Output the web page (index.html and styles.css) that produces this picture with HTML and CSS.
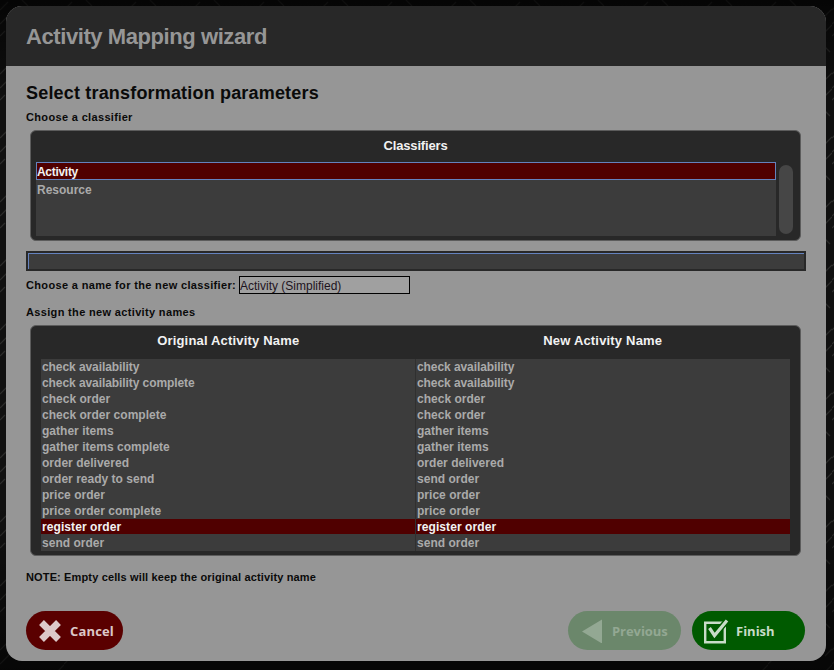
FILE: index.html
```html
<!DOCTYPE html>
<html lang="en">
<head>
<meta charset="utf-8">
<title>Activity Mapping wizard</title>
<link rel="stylesheet" href="styles.css">
</head>
<body>
<svg class="texture" aria-hidden="true" width="834" height="670">
  <defs>
    <pattern id="plate" width="64" height="64" patternUnits="userSpaceOnUse">
      <path d="M0 10 L8 2 M0 24 L9 15 M0 36 L5 31 M57 16 L64 9 M57 32 L64 25 M57 47 L62 52 M22 0 L28 6" stroke="#2b2b2a" stroke-width="1.200" fill="none"/>
    </pattern>
    <linearGradient id="shade" x1="0" y1="0" x2="0" y2="1">
      <stop offset="0" stop-color="#000" stop-opacity=".7"/>
      <stop offset=".15" stop-color="#000" stop-opacity="0"/>
      <stop offset=".75" stop-color="#000" stop-opacity="0"/>
      <stop offset="1" stop-color="#000" stop-opacity=".6"/>
    </linearGradient>
  </defs>
  <rect width="834" height="670" fill="url(#plate)"/>
  <rect width="834" height="670" fill="url(#shade)"/>
  <rect x="70" y="660" width="690" height="10" fill="#060606"/>
</svg>
<main class="wizard">
  <header class="wizard-header"><h1>Activity Mapping wizard</h1></header>
  <section class="wizard-body">
    <h2>Select transformation parameters</h2>
    <p class="label choose">Choose a classifier</p>
    <div class="box classifiers">
      <h3>Classifiers</h3>
      <div class="list-row">
        <ul class="list">
          <li class="selected">Activity</li>
          <li>Resource</li>
        </ul>
        <div class="scrollbar"></div>
      </div>
    </div>
    <div class="strip"><div class="strip-inner"></div></div>
    <div class="name-row">
      <label class="label" for="name">Choose a name for the new classifier:</label>
      <input id="name" type="text" value="Activity (Simplified)">
    </div>
    <p class="label assign">Assign the new activity names</p>
    <div class="box mapping">
      <div class="columns"><h3>Original Activity Name</h3><h3>New Activity Name</h3></div>
      <div class="table">
        <div class="row tight"><span>check availability</span><span>check availability</span></div>
        <div class="row tight"><span>check availability complete</span><span>check availability</span></div>
        <div class="row"><span>check order</span><span>check order</span></div>
        <div class="row"><span>check order complete</span><span>check order</span></div>
        <div class="row"><span>gather items</span><span>gather items</span></div>
        <div class="row"><span>gather items complete</span><span>gather items</span></div>
        <div class="row"><span>order delivered</span><span>order delivered</span></div>
        <div class="row"><span>order ready to send</span><span>send order</span></div>
        <div class="row"><span>price order</span><span>price order</span></div>
        <div class="row"><span>price order complete</span><span>price order</span></div>
        <div class="row selected"><span>register order</span><span>register order</span></div>
        <div class="row"><span>send order</span><span>send order</span></div>
      </div>
    </div>
    <p class="label note">NOTE: Empty cells will keep the original activity name</p>
    <footer class="actions">
      <button class="cancel"><svg width="24" height="24" viewBox="0 0 24 24"><path d="M3.500 3.500 20.500 20.500M20.500 3.500 3.500 20.500" stroke="currentColor" stroke-width="6.800" fill="none"/></svg><span>Cancel</span></button>
      <button class="previous" disabled><svg width="24" height="24" viewBox="0 0 24 24"><path d="M2 12.500 22 .5v24z" fill="currentColor"/></svg><span>Previous</span></button>
      <button class="finish"><svg width="24" height="24" viewBox="0 0 24 24"><path d="M1.200 3.700H20.800V23.300H1.200z" stroke="currentColor" stroke-width="2.400" fill="none"/><path d="M5.500 8.500 10.500 16 24 .5" stroke="#005a00" stroke-width="6" fill="none"/><path d="M5.500 9 10.500 16.500 23 1.500" stroke="currentColor" stroke-width="3.200" fill="none"/></svg><span>Finish</span></button>
    </footer>
  </section>
</main>
</body>
</html>
```
FILE: styles.css
```css
* { box-sizing: border-box; }
body {
  margin: 0;
  width: 834px;
  height: 670px;
  padding: 6px 8px 9px 6px;
  overflow: hidden;
  background: #101010;
  font-family: "Liberation Sans", Arial, sans-serif;
}
.texture { position: absolute; inset: 0; z-index: -1; }
h1, h2, h3, p, ul { margin: 0; padding: 0; }
.wizard {
  width: 820px;
  height: 655px;
  border-radius: 16px;
  overflow: hidden;
  background: #969696;
}
.wizard-header { height: 60px; padding: 0 20px; background: #282828; }
h1 { font-size: 22px; line-height: 61px; letter-spacing: -0.42px; color: #969696; white-space: nowrap; }
.wizard-body { padding: 14px 20px 0; display: flex; flex-direction: column; color: #0a0a0a; }
h2 { font-size: 18px; line-height: 26px; height: 26px; letter-spacing: 0.18px; white-space: nowrap; }
.label { font-size: 11px; font-weight: bold; line-height: 14px; letter-spacing: 0.34px; white-space: nowrap; }
.choose { margin-top: 4px; }
.box {
  margin: 0 5px 0 4px;
  border: 1px solid #5c5c5c;
  border-radius: 6px;
  background: #282828;
}
.classifiers { height: 111px; margin-top: 6px; padding: 0 6px 0 5px; }
h3 { font-size: 13px; line-height: 30px; letter-spacing: 0.18px; text-align: center; color: #f2f2f2; white-space: nowrap; }
.classifiers h3 { letter-spacing: -0.15px; padding-left: 1px; }
.list-row { display: flex; gap: 4px; margin-top: 1px; }
.list { width: 740px; height: 74px; background: #3c3c3c; list-style: none; }
.list li { height: 18px; padding-left: 1px; line-height: 20px; font-size: 12px; font-weight: bold; color: #aaa; }
.list .selected { line-height: 18px; padding-left: 0; border: 1px solid #6482be; background: #500000; color: #f2f2f2; letter-spacing: -0.3px; }
.scrollbar { width: 14px; height: 69px; margin-top: 3px; margin-left: -1px; border-radius: 7px; background: #464646; }
.strip { height: 20px; margin-top: 10px; padding: 2px; background: #282828; }
.strip-inner { height: 16px; border-top: 1px solid #6482be; border-left: 1px solid #6482be; background: #3c3c3c; }
.name-row { display: flex; align-items: center; margin-top: 5px; height: 18px; }
.name-row .label { width: 213px; }
input {
  width: 171px;
  height: 18px;
  padding: 1px 0 0;
  border: 1px solid #000;
  background: #a0a0a0;
  color: #1e141e;
  font: 12px "Liberation Sans", Arial, sans-serif;
}
.assign { margin-top: 11px; }
.mapping { height: 231px; margin-top: 6px; padding: 0 10px; }
.columns { display: grid; grid-template-columns: 1fr 1fr; height: 33px; }
.table { height: 192px; background: #3c3c3c; }
.row { display: grid; grid-template-columns: 375px 374px; height: 16px; font-size: 12px; font-weight: bold; line-height: 16px; letter-spacing: 0.02px; color: #aaa; }
.row.tight { letter-spacing: -0.08px; }
.row span { padding-left: 1px; white-space: nowrap; }
.row span:first-child { border-right: 1px solid #303030; }
.row.selected { color: #f2f2f2; letter-spacing: 0.08px; background: linear-gradient(#500000 15px, #3c3c3c 15px); }
.note { margin-top: 14px; letter-spacing: 0.14px; }
.actions { display: flex; margin-top: 27px; height: 39px; }
button {
  display: flex;
  align-items: center;
  height: 39px;
  padding: 0 0 0 12px;
  border: 0;
  border-radius: 20px;
  font: bold 13px "Open Sans", sans-serif;
  white-space: nowrap;
}
button span { margin-left: 8px; }
.cancel { width: 97px; background: #5a0000; color: #dcc8c8; letter-spacing: 0.15px; }
.previous { width: 113px; margin-left: auto; background: #6b876b; color: #93a893; letter-spacing: -0.05px; }
.finish { width: 113px; margin: 0 1px 0 11px; background: #005a00; color: #c8dcc8; }
.finish svg { overflow: visible; }
```
